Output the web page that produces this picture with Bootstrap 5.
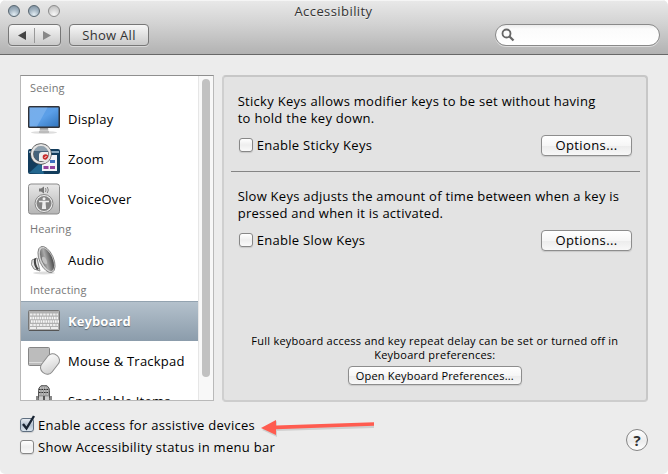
<!DOCTYPE html>
<html lang="en">
<head>
<meta charset="utf-8">
<title>Accessibility</title>
<link href="https://cdn.jsdelivr.net/npm/bootstrap@5.3.0/dist/css/bootstrap.min.css" rel="stylesheet">
<style>
html{background:#fff}
body{width:668px;height:474px;overflow:hidden;margin:0;background:#fff;font-family:"Open Sans","Noto Sans",sans-serif;font-size:13px;line-height:17px;letter-spacing:.29px;color:#000}
.window{width:668px;height:474px;background:#ececec;border-radius:6px 6px 5px 5px;overflow:hidden}
.titlebar{height:55px;background:linear-gradient(#e9e9e9,#d2d2d2 45%,#b2b2b2);border-bottom:1px solid #686868;box-shadow:inset 0 1px #f5f5f5;color:#333;text-shadow:0 1px rgba(255,255,255,.5)}
.title-row{height:22px;padding-left:8px}
.title-text{letter-spacing:.42px;padding-right:61px}
.light{width:12px;height:12px;border-radius:50%;border:1px solid #56656f;background:radial-gradient(circle at 50% 85%,#e3edf3,#a4b5c2 50%,#77899a)}
.light.off{border-color:#8b8b8b;background:radial-gradient(circle at 50% 85%,#f8f8f8,#d4d4d4 55%,#b5b5b5)}
.tool-row{padding:2px 8px 0}
.tool{height:22px;border:1px solid #777;border-radius:4px;background:linear-gradient(#f7f7f7,#cacaca);box-shadow:0 1px rgba(255,255,255,.45);padding:0;font-size:13px;line-height:20px;letter-spacing:.29px;color:#333}
.tool.nav-pair{width:53px}
.tool.show-all{width:80px;margin-left:8px}
.search{width:165px;height:22px;border-radius:11px;border:1px solid #898989;background:linear-gradient(#ececec,#fbfbfb 4px,#fff);box-shadow:0 1px rgba(255,255,255,.5);padding-left:5px}
.main{padding:20px 20px 0;gap:8px}
.side{width:194px;height:326px;background:#fff;border:1px solid #b9b9b9;border-top-color:#8f8f8f;overflow:hidden;letter-spacing:.22px}
.side-list{width:177px;flex:none}
.side-list .group{height:21px;flex:none;line-height:20px;padding-left:9px;color:#777;font-size:11px;letter-spacing:.12px}
.side-list .group:first-child{height:23px;line-height:24px}
.side-list .side-item{height:40px;flex:none;margin:0;padding:0 0 0 7px;border:0;border-radius:0;background:none;color:#000;gap:8px;line-height:40px;white-space:nowrap}
.side-item svg{flex:none}
.side-list .side-item.active{background:linear-gradient(#b5c2cd,#8b9cab);box-shadow:inset 0 1px #93a3b0;color:#fff;font-weight:700;letter-spacing:.1px;text-shadow:0 1px 1px rgba(0,0,0,.4)}
.track{width:15px;background:#f8f8f8;border-left:1px solid #e6e6e6;padding:3px 3px 0}
.thumb{width:8px;height:298px;border-radius:4px;background:#c1c1c1}
.pane{width:427px;height:327px;background:#e3e3e3;border:2px solid #c7c7c7;border-left-color:#cfcfcf;border-bottom-color:#cdcdcd;border-radius:4px;padding:16px 7px 0 7px}
.option{padding:0 7px}
.option-row{height:22px;margin-top:7px}
.option-row .check{margin:0 4px 0 1px}
.rule{height:1px;background:#858585;margin:15px -1px 16px 0}
.push{border:1px solid #8d8d8d;border-radius:4px;background:linear-gradient(#fff,#f6f6f6 50%,#ececec 52%,#f8f8f8);box-shadow:0 1px 1px rgba(0,0,0,.12);padding:0;color:#000;text-align:center}
.push.options{width:91px;height:21px;font-size:13px;line-height:19px;letter-spacing:.4px;margin-top:1px}
.push.small-push{width:174px;height:19px;font-size:11px;line-height:17px;letter-spacing:.18px;margin-top:4px}
.check{width:14px;height:14px;flex:none;border:1px solid #878787;border-radius:3px;background:linear-gradient(#fff,#eee 50%,#fafafa);box-shadow:0 1px 1px rgba(0,0,0,.12)}
.check.on{border-color:#5f6f80;background:linear-gradient(#e6ecf2,#b3c1d0 50%,#dbe5ee)}
.check svg{display:block;overflow:visible;margin:-4px 0 0 -1px}
.tight{letter-spacing:.25px}
.note{font-size:11px;line-height:14px;margin-top:83px;letter-spacing:.24px}
.foot{padding:12px 20px 0;height:72px;position:relative}
.foot-line{height:22px;gap:4px}
.help{width:22px;height:22px;border-radius:50%;border:1px solid #858585;background:linear-gradient(#fff,#ececec 55%,#fff);font-weight:700;font-size:15px;line-height:20px;letter-spacing:0;color:#333;margin-top:15px}
.arrow{position:absolute;left:256px;top:12px}
.t{white-space:nowrap}
</style>
</head>
<body>
<div class="window d-flex flex-column">
  <header class="titlebar">
    <div class="title-row d-flex align-items-center">
      <div class="d-flex gap-2"><i class="light"></i><i class="light"></i><i class="light off"></i></div>
      <div class="title-text flex-fill text-center"><span class="t">Accessibility</span></div>
    </div>
    <div class="tool-row d-flex">
      <div class="tool nav-pair d-flex">
        <svg width="51" height="20"><path d="M9 10.500 17 6v9z" fill="#444"/><path d="M42 10.500 34 6v9z" fill="#888"/><path d="M25.500 3v15" stroke="#999"/></svg>
      </div>
      <button class="btn tool show-all"><span class="t">Show All</span></button>
      <div class="search ms-auto d-flex align-items-center"><svg width="14" height="14" fill="none" stroke="#666"><circle cx="5.500" cy="5.500" r="4" stroke-width="1.800"/><path d="m8.500 8.500 4 4" stroke-width="2.300"/></svg></div>
    </div>
  </header>

  <main class="main d-flex">
    <aside class="side d-flex">
      <div class="side-list list-group list-group-flush">
        <div class="group"><span class="t">Seeing</span></div>
        <a class="side-item list-group-item d-flex align-items-center">
          <svg width="32" height="32" viewBox="0 0 32 32"><defs><linearGradient id="scr" x2="1" y2="1"><stop stop-color="#5f9de3"/><stop offset=".5" stop-color="#5b9fe8"/><stop offset="1" stop-color="#3275bd"/></linearGradient><linearGradient id="met" x2="0" y2="1"><stop stop-color="#777"/><stop offset="1" stop-color="#eee"/></linearGradient></defs><ellipse cx="16" cy="29.500" rx="13" ry="1.500" fill="#ddd"/><path d="M12 24h8l.5 5h-9z" fill="url(#met)"/><path d="M11 29h10" stroke="#999"/><rect y="3" width="32" height="22" rx="1.500" fill="#303238"/><path d="M1.500 4.500h29v19h-29z" fill="url(#scr)"/><path d="M1.500 4.500h18L9 23.500H1.500z" fill="#9cc6f5" opacity=".4"/></svg>
          <span class="t">Display</span></a>
        <a class="side-item list-group-item d-flex align-items-center">
          <svg width="32" height="32" viewBox="0 0 32 32"><rect y="6" width="32" height="25" rx="2" fill="#123c5c"/><path d="M1 9h30" stroke="#86a5bd" stroke-width="2"/><path d="m1 30 12-11 3 12z" fill="#23678f"/><path d="M14 12h15v16H14z" fill="#f4f4f8"/><path d="M22 17h5v3h-5z" fill="#3d6ec0"/><path d="M15.500 23h5v3h-5zm6.500 0h5v3h-5z" fill="#94439e"/><circle cx="13" cy="11" r="9" fill="#45627a" stroke="#555" stroke-width="3.400"/><path d="M5 8q3-5 8-5t8 5z" fill="#8ea0ae"/><path d="M11 12q0-3 3-3h6q1 4-2 9h-7z" fill="#eee"/><circle cx="17.500" cy="14" r="2.800" fill="#c82d2d"/><path d="m16.500 15 2-2" stroke="#fff"/><circle cx="13" cy="11" r="9" fill="none" stroke="#e4e4e4" stroke-width="2.200"/></svg>
          <span class="t">Zoom</span></a>
        <a class="side-item list-group-item d-flex align-items-center">
          <svg width="32" height="32" viewBox="0 0 32 32"><defs><linearGradient id="vo" x2="0" y2="1"><stop stop-color="#e8e8e8"/><stop offset="1" stop-color="#b5b5b5"/></linearGradient></defs><rect x=".5" y="1" width="31" height="30" rx="2.500" fill="url(#vo)" stroke="#8b8b8b"/><path d="M11 5.500h2l3-2v7l-3-2h-2z" fill="#777"/><path d="M17.500 5q1 2 0 4m1.800-5q2 3 0 6" stroke="#888" fill="none"/><circle cx="16" cy="20.500" r="9" fill="#eee" stroke="#888"/><circle cx="16" cy="20.500" r="7.500" fill="#858585"/><circle cx="16" cy="15.700" r="1.500" fill="#eee"/><path d="M11 18.500h10M14.500 26l.7-7h1.600l.7 7M15 18.500h2v4h-2z" stroke="#eee" stroke-width="1.300" fill="#eee"/></svg>
          <span class="t">VoiceOver</span></a>
        <div class="group"><span class="t">Hearing</span></div>
        <a class="side-item list-group-item d-flex align-items-center">
          <svg width="32" height="32" viewBox="0 0 32 32"><defs><linearGradient id="co" x2="1" y2=".4"><stop stop-color="#555"/><stop offset=".5" stop-color="#aaa"/><stop offset="1" stop-color="#555"/></linearGradient></defs><ellipse cx="16" cy="29" rx="11" ry="1.500" fill="#ddd"/><path d="M9 14 4 16q-2 5 2 9l6 2z" fill="#e5e5e5" stroke="#888"/><path d="M6 15q-1 6 3 11l2-1q-4-4-3-11z" fill="#444"/><ellipse cx="18.500" cy="15.500" rx="7" ry="14" transform="rotate(-24 18.500 15.500)" fill="#d5d5d5" stroke="#777" stroke-width=".8"/><ellipse cx="19" cy="15.500" rx="5.500" ry="12.300" transform="rotate(-24 19 15.500)" fill="url(#co)"/><ellipse cx="16.500" cy="16.500" rx="2" ry="4" transform="rotate(-24 16.500 16.500)" fill="#c2c2c2"/></svg>
          <span class="t">Audio</span></a>
        <div class="group"><span class="t">Interacting</span></div>
        <a class="side-item active list-group-item d-flex align-items-center">
          <svg width="32" height="32" viewBox="0 0 32 32"><rect x=".5" y="5.500" width="31" height="20" rx="1" fill="#b0b0b0" stroke="#777"/><path d="M1 25.500h30" stroke="#555"/><path d="M2 9.500h28M2 20h28" stroke="#eee" stroke-width="2" stroke-dasharray="2.500 .8"/><path d="M2 13h28M3 16.500h28" stroke="#f6f6f6" stroke-width="2.300" stroke-dasharray="1.700 .7"/><path d="M2 23h6m1 0h13m1 0h7" stroke="#eee" stroke-width="2"/></svg>
          <span class="t">Keyboard</span></a>
        <a class="side-item list-group-item d-flex align-items-center">
          <svg width="32" height="32" viewBox="0 0 32 32"><defs><linearGradient id="mo" x2="1" y2="1"><stop stop-color="#fff"/><stop offset="1" stop-color="#ccc"/></linearGradient></defs><rect x=".5" y="2.500" width="21" height="18" rx="1" fill="#bcbcbc" stroke="#858585"/><path d="M1 17.500h20" stroke="#ddd"/><rect x="15.500" y="8" width="13" height="22" rx="6" transform="rotate(38 22 19)" fill="url(#mo)" stroke="#8b8b8b"/></svg>
          <span class="t">Mouse &amp; Trackpad</span></a>
        <a class="side-item list-group-item d-flex align-items-center">
          <svg width="32" height="32" viewBox="0 0 32 32"><path d="M9 11v5q0 6 7 6t7-6v-5" fill="none" stroke="#888" stroke-width="2"/><rect x="10.500" y="0" width="11" height="19" rx="5.500" fill="#999" stroke="#555"/><path d="M12 3h8M11 6h10M11 9h10" stroke="#ddd" stroke-dasharray="1.500 1"/><path d="M11 4.500h10M11 7.500h10" stroke="#333" stroke-dasharray="1.500 1"/><path d="M11 11.500h10v8H11z" fill="#ccc"/><path d="M16 11v8" stroke="#555" stroke-width="2"/></svg>
          <span class="t">Speakable Items</span></a>
      </div>
      <div class="track"><div class="thumb"></div></div>
    </aside>

    <section class="pane">
      <div class="option">
        <div><span class="t">Sticky Keys allows modifier keys to be set without having</span><br><span class="t">to hold the key down.</span></div>
        <div class="option-row d-flex align-items-center"><i class="check"></i><span class="t">Enable Sticky Keys</span><button class="btn push options ms-auto"><span class="t">Options...</span></button></div>
      </div>
      <div class="rule"></div>
      <div class="option">
        <div class="tight"><span class="t">Slow Keys adjusts the amount of time between when a key is</span><br><span class="t">pressed and when it is activated.</span></div>
        <div class="option-row d-flex align-items-center"><i class="check"></i><span class="t">Enable Slow Keys</span><button class="btn push options ms-auto"><span class="t">Options...</span></button></div>
      </div>
      <div class="note text-center"><span class="t">Full keyboard access and key repeat delay can be set or turned off in</span><br><span class="t">Keyboard preferences:</span></div>
      <div class="d-flex justify-content-center"><button class="btn push small-push"><span class="t">Open Keyboard Preferences...</span></button></div>
    </section>
  </main>

  <footer class="foot d-flex">
    <div>
      <div class="foot-line d-flex align-items-center"><i class="check on"><svg width="16" height="16"><path d="m3 9 3.500 4.500L14 1" fill="none" stroke="#182433" stroke-width="2.400"/></svg></i><span class="t">Enable access for assistive devices</span></div>
      <div class="foot-line d-flex align-items-center"><i class="check"></i><span class="t">Show Accessibility status in menu bar</span></div>
    </div>
    <button class="btn help p-0 ms-auto">?</button>
    <svg class="arrow" width="124" height="30"><path d="m6 15 15-9v6l97-3v4l-97 3v6z" fill="#000" opacity=".12" transform="translate(0 1)"/><path d="m5 14 15-8v5.500l98-3.200v3.400l-98 3.500V21z" fill="#ff5c50"/></svg>
  </footer>
</div>
<script src="https://cdn.jsdelivr.net/npm/bootstrap@5.3.0/dist/js/bootstrap.bundle.min.js"></script>
</body>
</html>
